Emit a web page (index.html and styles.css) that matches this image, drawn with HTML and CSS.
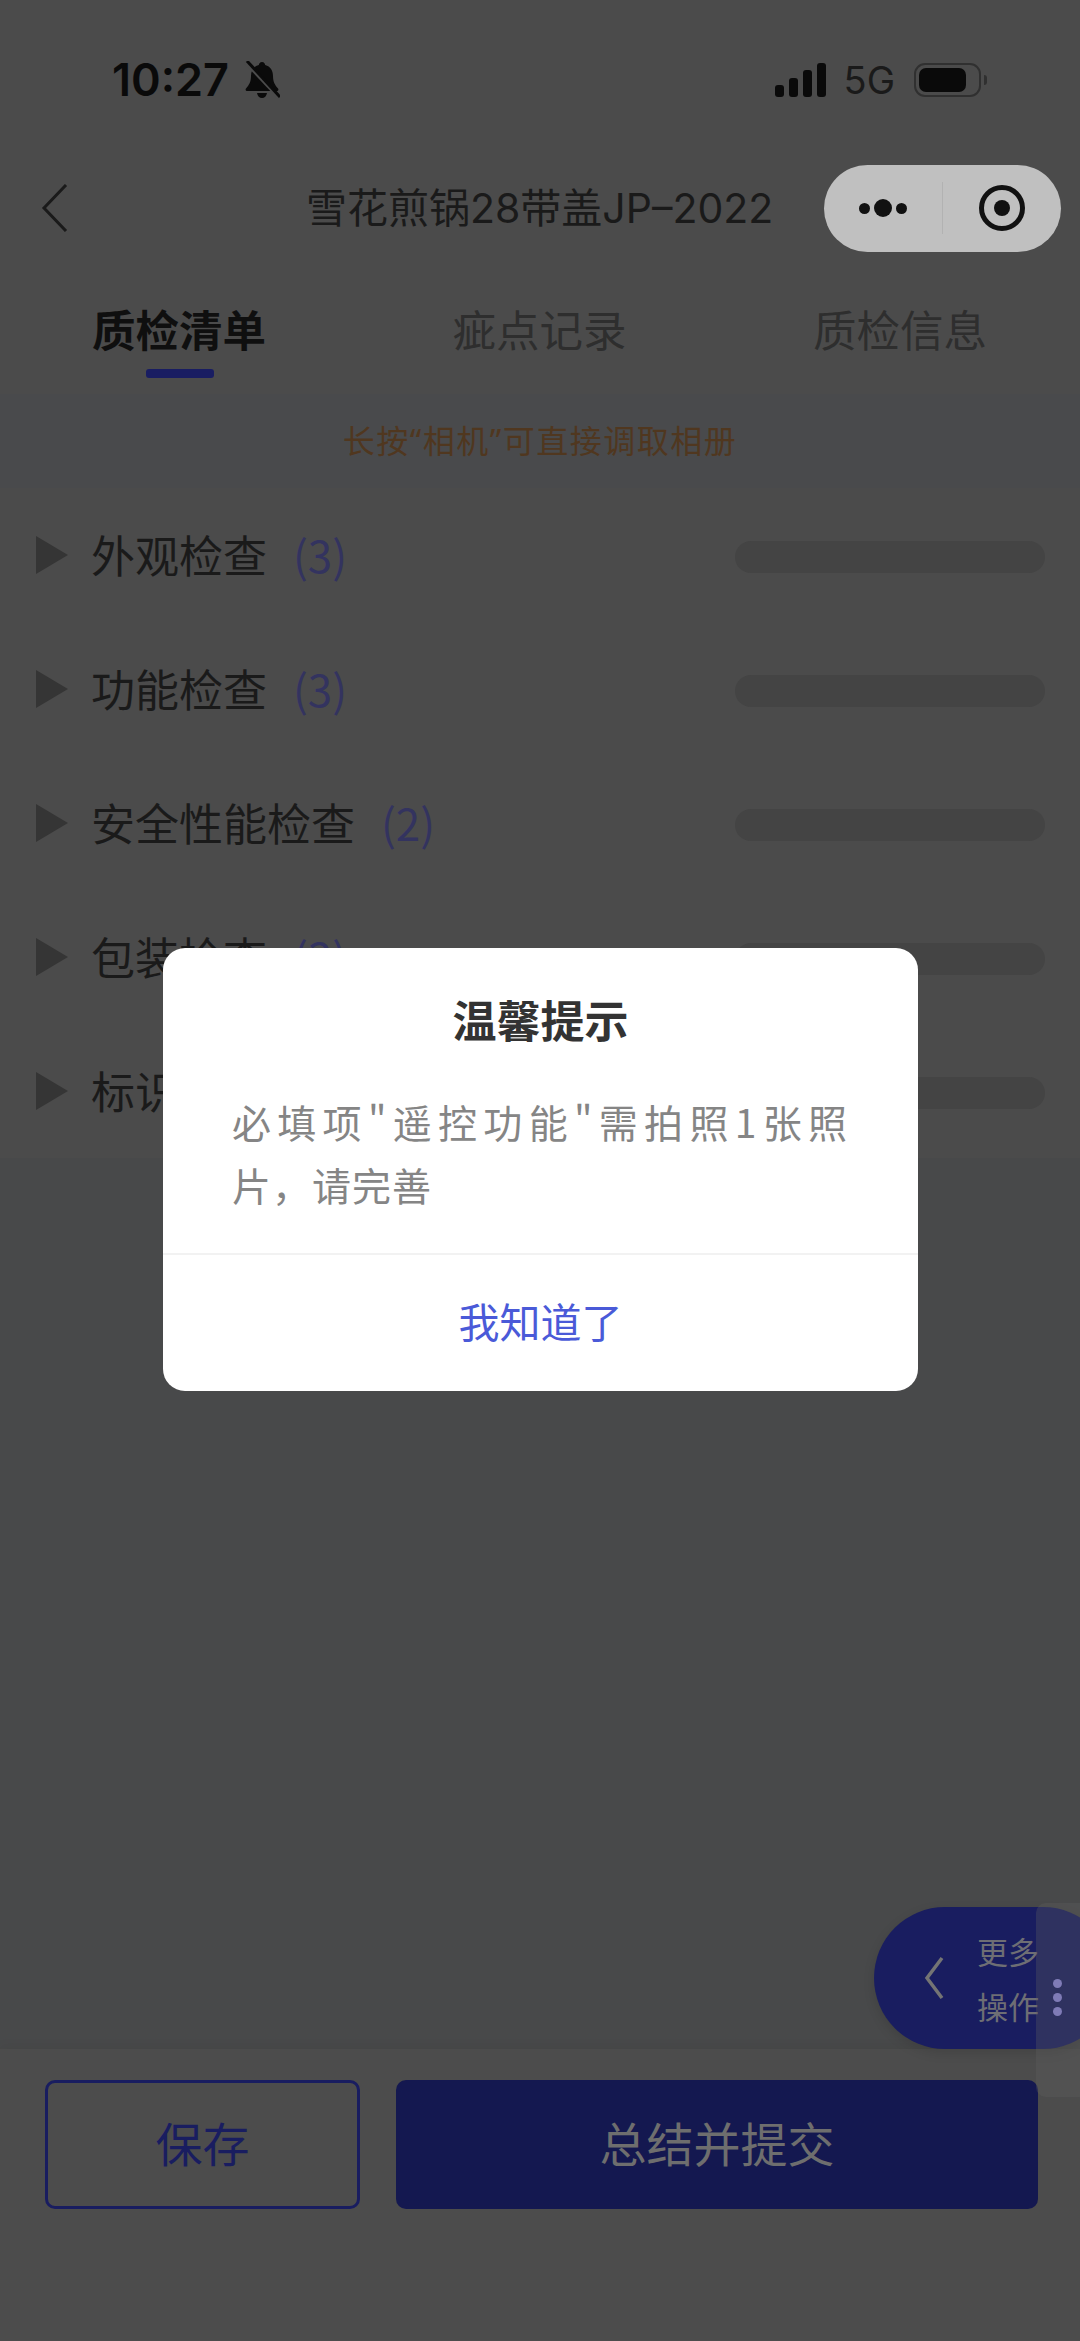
FILE: index.html
```html
<!DOCTYPE html>
<html lang="zh-CN">

<head>
    <meta charset="UTF-8">
    <meta name="viewport" content="width=device-width, initial-scale=1.0">
    <title>质检清单</title>
    <link rel="stylesheet" href="styles.css">
</head>

<body>
    <div class="page">
        <div class="status-bar">
            <div class="status-left">
                <span class="time">10:27</span>
                <svg class="bell" viewBox="0 0 36 38">
                    <path d="M18 1c2 0 3 1.500 3.200 3C26.500 5.500 29 9.500 29 15c0 6 2 9 5 12.500 1 1.500 0 2.500-1.500 2.500h-29C2 30 1 29 2 27.500 5 24 7 21 7 15 7 9.500 9.500 5.500 14.800 4 15 2.500 16 1 18 1z" />
                    <path d="M13 32h10c-.5 3-2.500 5-5 5s-4.500-2-5-5z" />
                    <path class="bell-gap" d="M1 1l34 36" />
                    <path class="bell-slash" d="M3 0l33 36" />
                </svg>
            </div>
            <div class="status-right">
                <div class="signal">
                    <span class="bar bar-1"></span>
                    <span class="bar bar-2"></span>
                    <span class="bar bar-3"></span>
                    <span class="bar bar-4"></span>
                </div>
                <span class="network">5G</span>
                <div class="battery">
                    <div class="battery-level"></div>
                </div>
                <span class="battery-nub"></span>
            </div>
        </div>

        <div class="nav-bar">
            <svg class="back-icon" viewBox="0 0 27 48">
                <path d="M25 1L3 24l22 23" />
            </svg>
            <div class="nav-title">雪花煎锅28带盖JP–2022</div>
            <div class="capsule">
                <div class="capsule-more">
                    <span class="dot"></span>
                    <span class="dot dot-big"></span>
                    <span class="dot"></span>
                </div>
                <div class="capsule-line"></div>
                <div class="capsule-close">
                    <span class="target"></span>
                </div>
            </div>
        </div>

        <div class="tabs">
            <div class="tab tab-active">质检清单</div>
            <div class="tab">疵点记录</div>
            <div class="tab">质检信息</div>
        </div>

        <div class="notice">长按“相机”可直接调取相册</div>

        <div class="check-list">
            <div class="check-row">
                <span class="arrow"></span>
                <span class="row-name">外观检查</span>
                <span class="row-count">(3)</span>
                <span class="row-pill"></span>
            </div>
            <div class="check-row">
                <span class="arrow"></span>
                <span class="row-name">功能检查</span>
                <span class="row-count">(3)</span>
                <span class="row-pill"></span>
            </div>
            <div class="check-row">
                <span class="arrow"></span>
                <span class="row-name">安全性能检查</span>
                <span class="row-count">(2)</span>
                <span class="row-pill"></span>
            </div>
            <div class="check-row">
                <span class="arrow"></span>
                <span class="row-name">包装检查</span>
                <span class="row-count">(3)</span>
                <span class="row-pill"></span>
            </div>
            <div class="check-row">
                <span class="arrow"></span>
                <span class="row-name">标识检查</span>
                <span class="row-count">(3)</span>
                <span class="row-pill"></span>
            </div>
        </div>

        <div class="empty-area"></div>

        <div class="footer">
            <button class="save-btn"><span class="btn-label">保存</span></button>
            <button class="submit-btn"><span class="btn-label">总结并提交</span></button>
        </div>

        <div class="more-fab">
            <svg class="fab-arrow" viewBox="0 0 20 44">
                <path d="M18 2L3 22l15 20" />
            </svg>
            <div class="fab-text">更多<br>操作</div>
        </div>
        <div class="side-handle">
            <span class="handle-dot"></span>
            <span class="handle-dot"></span>
            <span class="handle-dot"></span>
        </div>

        <div class="modal">
            <div class="modal-title">温馨提示</div>
            <div class="modal-text">
                <div class="modal-line-full">必填项"遥控功能"需拍照1张照</div>
                <div>片，请完善</div>
            </div>
            <div class="modal-btn">我知道了</div>
        </div>
    </div>
</body>

</html>
```

FILE: styles.css
```css
* {
    box-sizing: border-box;
}

body {
    margin: 0;
    font-family: "Noto Sans CJK SC", "Noto Sans", sans-serif;
    background-color: #4b4b4b;
}

.page {
    position: relative;
    width: 1080px;
    height: 2341px;
    overflow: hidden;
    display: flex;
    flex-direction: column;
    background-color: #4b4b4b;
}

/* status bar */
.status-bar {
    height: 160px;
    padding: 0 93px 0 112px;
    display: flex;
    justify-content: space-between;
    align-items: center;
    color: #0a0a0a;
}

.status-left {
    display: flex;
    align-items: center;
    gap: 15px;
}

.time {
    font-family: Inter, sans-serif;
    font-size: 45px;
    font-weight: 600;
    line-height: 46px;
}

.bell {
    width: 36px;
    height: 38px;
    fill: #0a0a0a;
}

.bell-gap {
    fill: none;
    stroke: #4b4b4b;
    stroke-width: 3;
}

.bell-slash {
    fill: none;
    stroke: #0a0a0a;
    stroke-width: 3;
}

.status-right {
    display: flex;
    align-items: center;
}

.signal {
    display: flex;
    align-items: flex-end;
    gap: 5px;
    height: 34px;
}

.bar {
    width: 9px;
    border-radius: 3px;
    background-color: #0a0a0a;
}

.bar-1 {
    height: 12px;
}

.bar-2 {
    height: 19px;
}

.bar-3 {
    height: 27px;
}

.bar-4 {
    height: 34px;
}

.network {
    margin: 0 19px 0 18px;
    font-family: Inter, sans-serif;
    font-size: 38px;
    line-height: 40px;
    color: #1a1a1a;
}

.battery {
    width: 67px;
    height: 34px;
    padding: 3px;
    border: 2px solid #303030;
    border-radius: 11px;
}

.battery-level {
    width: 47px;
    height: 100%;
    border-radius: 7px;
    background-color: #0a0a0a;
}

.battery-nub {
    width: 3px;
    height: 10px;
    margin-left: 3px;
    border-radius: 0 3px 3px 0;
    background-color: #303030;
}

/* nav bar */
.nav-bar {
    position: relative;
    height: 96px;
    display: flex;
    align-items: center;
    padding: 0 19px 0 41px;
}

.back-icon {
    width: 27px;
    height: 48px;
    fill: none;
    stroke: #1a1a1a;
    stroke-width: 3;
}

.nav-title {
    flex: 1;
    padding-left: 238px;
    font-family: Inter, "Noto Sans CJK SC", sans-serif;
    font-size: 41px;
    line-height: 48px;
    color: #1a1a1a;
    white-space: nowrap;
}

.capsule {
    width: 237px;
    height: 87px;
    border-radius: 44px;
    display: flex;
    align-items: center;
    background-color: #c0c0c0;
}

.capsule-more {
    width: 118px;
    display: flex;
    justify-content: center;
    align-items: center;
    gap: 4px;
}

.dot {
    width: 11px;
    height: 11px;
    border-radius: 50%;
    background-color: #111;
}

.dot-big {
    width: 18px;
    height: 18px;
}

.capsule-line {
    width: 1px;
    height: 52px;
    background-color: #b2b2b2;
}

.capsule-close {
    flex: 1;
    display: flex;
    justify-content: center;
}

.target {
    width: 46px;
    height: 46px;
    border-radius: 50%;
    border: 5px solid #111;
    display: flex;
    align-items: center;
    justify-content: center;
}

.target::after {
    content: "";
    width: 16px;
    height: 16px;
    border-radius: 50%;
    background-color: #111;
}

/* tabs */
.tabs {
    height: 138px;
    padding: 0 93px 0 92px;
    display: flex;
    justify-content: space-between;
}

.tab {
    position: relative;
    padding-top: 47px;
    font-size: 43.500px;
    line-height: 52px;
    color: #2e2e2e;
}

.tab-active {
    font-weight: 700;
    color: #0f0f0f;
}

.tab-active::after {
    content: "";
    position: absolute;
    left: 54px;
    top: 113px;
    width: 68px;
    height: 9px;
    border-radius: 3px;
    background-color: #191d62;
}

.notice {
    height: 94px;
    padding-bottom: 4px;
    display: flex;
    justify-content: center;
    align-items: center;
    font-family: "Noto Sans", "Noto Sans CJK SC", sans-serif;
    font-size: 32px;
    letter-spacing: 1.500px;
    color: #50371f;
    background-color: #494a4c;
}

/* list */
.check-row {
    height: 134px;
    padding: 0 35px 0 36px;
    display: flex;
    align-items: center;
}

.arrow {
    width: 0;
    height: 0;
    border-style: solid;
    border-width: 19px 0 19px 32px;
    border-color: transparent transparent transparent #353535;
}

.row-name {
    margin-left: 23px;
    padding-bottom: 3px;
    font-size: 44px;
    line-height: 52px;
    color: #1a1a1a;
}

.row-count {
    margin-left: 26px;
    padding-bottom: 3px;
    font-size: 44px;
    line-height: 52px;
    color: #33335f;
}

.row-pill {
    width: 310px;
    height: 32px;
    margin-top: 4px;
    margin-left: auto;
    border-radius: 16px;
    background-color: #444;
}

.empty-area {
    flex: 1;
    background-color: #48494a;
}

/* footer */
.footer {
    height: 292px;
    padding: 31px 42px 0 45px;
    display: flex;
    align-items: flex-start;
    gap: 36px;
    background-color: #4c4c4c;
    box-shadow: 0 -3px 10px rgba(0, 0, 0, 0.05);
}

.save-btn,
.submit-btn {
    height: 129px;
    padding: 0 0 6px;
    border-radius: 10px;
    font-family: inherit;
    font-size: 47px;
}

.save-btn {
    width: 315px;
    border: 3px solid #191d60;
    background: none;
    color: #191d60;
}

.submit-btn {
    flex: 1;
    border: none;
    background-color: #141850;
    color: #6e6e6e;
}

/* floating pieces */
.more-fab {
    position: absolute;
    left: 874px;
    top: 1907px;
    width: 240px;
    height: 142px;
    padding-left: 50px;
    display: flex;
    align-items: center;
    gap: 33px;
    border-radius: 71px;
    background-color: #191d60;
    box-shadow: 0 4px 12px rgba(0, 0, 0, 0.12);
}

.fab-arrow {
    width: 20px;
    height: 44px;
    fill: none;
    stroke: #747474;
    stroke-width: 3.5;
}

.fab-text {
    font-size: 31px;
    line-height: 55px;
    color: #6e6e74;
}

.side-handle {
    position: absolute;
    right: 0;
    top: 1903px;
    width: 44px;
    height: 194px;
    padding: 76px 0 0 17px;
    display: flex;
    flex-direction: column;
    gap: 5px;
    border-radius: 10px 0 0 10px;
    background-color: rgba(96, 96, 96, 0.32);
}

.handle-dot {
    width: 9px;
    height: 9px;
    border-radius: 50%;
    background-color: #7f7bb6;
}

/* dialog */
.modal {
    position: absolute;
    left: 163px;
    top: 948px;
    width: 755px;
    height: 443px;
    display: flex;
    flex-direction: column;
    border-radius: 22px;
    background-color: #fff;
}

.modal-title {
    padding-top: 45px;
    font-size: 44px;
    font-weight: 700;
    line-height: 52px;
    text-align: center;
    color: #333;
}

.modal-text {
    height: 208px;
    padding: 45px 70px 0 69px;
    font-size: 39px;
    line-height: 63px;
    letter-spacing: 1px;
    color: #858585;
}

.modal-line-full {
    text-align: justify;
    text-align-last: justify;
}

.modal-btn {
    flex: 1;
    padding-bottom: 7px;
    display: flex;
    align-items: center;
    justify-content: center;
    border-top: 2px solid #f2f2f2;
    font-size: 41px;
    color: #4a5ad8;
}
```
